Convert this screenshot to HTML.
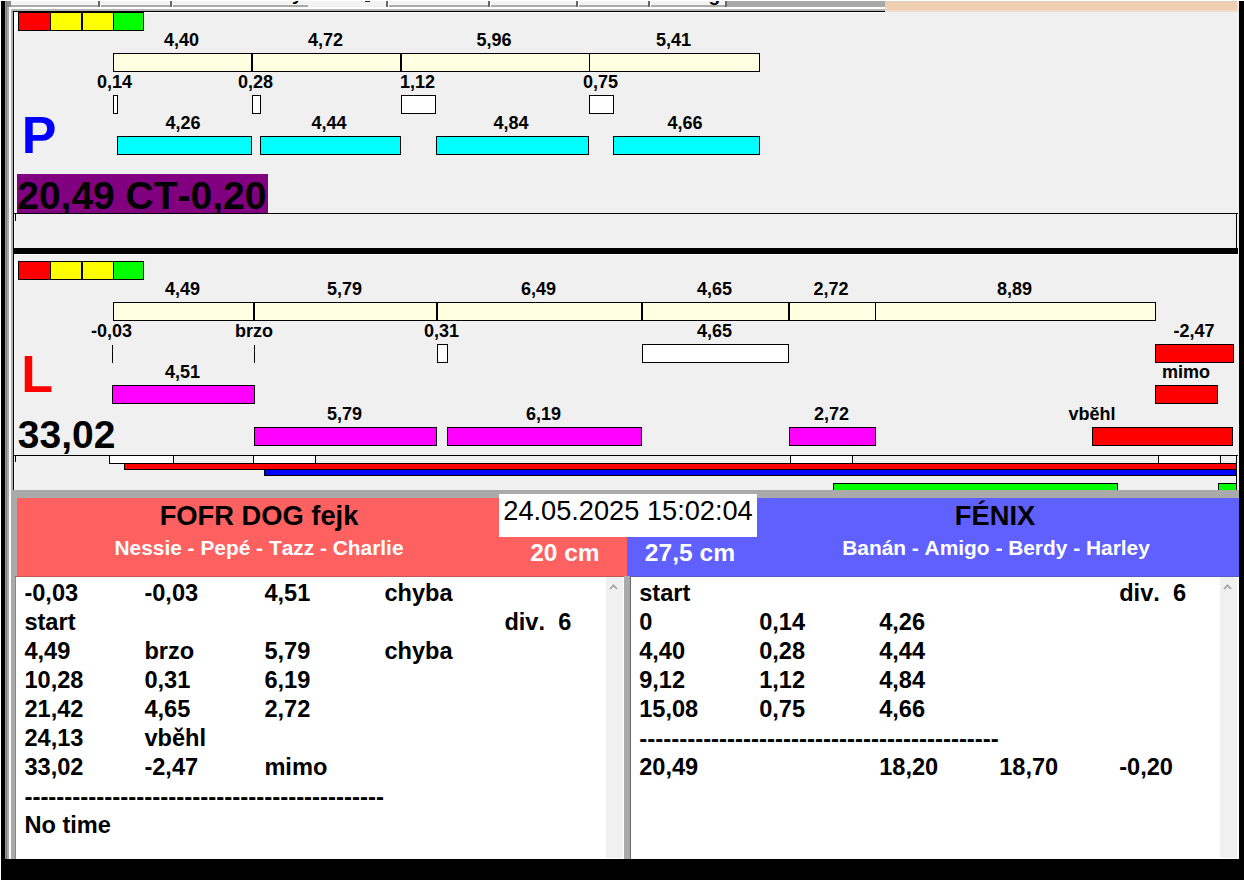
<!DOCTYPE html>
<html lang="cs">
<head>
<meta charset="utf-8">
<title>Flyball</title>
<style>
html,body{margin:0;padding:0}
body{font-kerning:none;width:1244px;height:880px;position:relative;overflow:hidden;background:#fff;font-family:"Liberation Sans",sans-serif;color:#000}
.r{position:absolute}
.b{position:absolute;box-sizing:border-box;border:1px solid #000}
.l{position:absolute;font-weight:bold;font-size:18px;line-height:20px;white-space:nowrap;transform:translateX(-50%)}
.big{position:absolute;font-weight:bold;font-size:39px;line-height:40px;white-space:nowrap}
.side{position:absolute;font-weight:bold;font-size:52px;line-height:52px}
.ta{position:absolute;background:#fff;font-weight:bold;font-size:23.6px;line-height:29px;overflow:hidden;box-sizing:border-box;tab-size:120px;-moz-tab-size:120px}
.row{position:relative;height:29px}
.row span{position:absolute;top:0;white-space:pre}
.row span.d{font-size:24px}
.tab{position:absolute;font-weight:bold;font-size:19px;line-height:20px}
.hd{position:absolute;font-weight:bold;white-space:nowrap;text-align:center}
</style>
</head>
<body>

<div class="r" style="left:1px;top:1px;width:4px;height:879px;background:#000"></div>
<div class="r" style="left:5px;top:1px;width:1px;height:858px;background:#999"></div>
<div class="r" style="left:6px;top:1px;width:1px;height:858px;background:#777"></div>
<div class="r" style="left:7px;top:1px;width:2px;height:858px;background:#aaa"></div>
<div class="r" style="left:9px;top:1px;width:2px;height:858px;background:#fff"></div>
<div class="r" style="left:11px;top:7px;width:2px;height:483px;background:#b0b0b0"></div>
<div class="r" style="left:1239px;top:1px;width:5px;height:879px;background:#000"></div>
<div class="r" style="left:7px;top:1px;width:4px;height:6px;background:#8c8c8c"></div>
<div class="r" style="left:11px;top:1px;width:715px;height:4px;background:#f4f4f4"></div>
<div class="r" style="left:11px;top:5px;width:715px;height:2px;background:#aaa"></div>
<div class="r" style="left:726px;top:1px;width:159px;height:6px;background:#a9a9a9"></div>
<div class="r" style="left:11px;top:7px;width:874px;height:2px;background:#fff"></div>
<div class="r" style="left:11px;top:9px;width:874px;height:2px;background:#b4b4b4"></div>
<div class="r" style="left:98px;top:1px;width:2px;height:6px;background:#666"></div>
<div class="r" style="left:100px;top:1px;width:1px;height:6px;background:#fff"></div>
<div class="r" style="left:170px;top:1px;width:2px;height:6px;background:#666"></div>
<div class="r" style="left:172px;top:1px;width:1px;height:6px;background:#fff"></div>
<div class="r" style="left:386px;top:1px;width:2px;height:6px;background:#666"></div>
<div class="r" style="left:388px;top:1px;width:1px;height:6px;background:#fff"></div>
<div class="r" style="left:488px;top:1px;width:2px;height:6px;background:#666"></div>
<div class="r" style="left:490px;top:1px;width:1px;height:6px;background:#fff"></div>
<div class="r" style="left:576px;top:1px;width:2px;height:6px;background:#666"></div>
<div class="r" style="left:578px;top:1px;width:1px;height:6px;background:#fff"></div>
<div class="r" style="left:648px;top:1px;width:2px;height:6px;background:#666"></div>
<div class="r" style="left:650px;top:1px;width:1px;height:6px;background:#fff"></div>
<div class="r" style="left:725px;top:1px;width:2px;height:6px;background:#666"></div>
<div class="r" style="left:308px;top:5px;width:78px;height:2px;background:#f0f0f0"></div>
<div class="r" style="left:365px;top:1px;width:5px;height:1px;background:#222"></div>
<div class="r" style="left:280px;top:1px;width:30px;height:4px;overflow:hidden"><div class="tab" style="left:12px;top:-17px">y</div></div>
<div class="r" style="left:700px;top:1px;width:24px;height:4px;overflow:hidden"><div class="tab" style="left:8.5px;top:-15.6px">g</div></div>
<div class="r" style="left:885px;top:1px;width:354px;height:11px;background:#efd0b4"></div>
<div class="r" style="left:885px;top:1px;width:354px;height:2px;background:#e6cfba"></div>
<div class="r" style="left:885px;top:10px;width:354px;height:2px;background:#efdccc"></div>
<div class="r" style="left:1237px;top:1px;width:2px;height:11px;background:#f3e6da"></div>
<div class="r" style="left:14px;top:12px;width:1225px;height:478px;background:#f0f0f0"></div>
<div class="r" style="left:13px;top:11px;width:872px;height:1px;background:#000"></div>
<div class="r" style="left:14px;top:12px;width:871px;height:1px;background:#fff"></div>
<div class="r" style="left:13px;top:11px;width:1px;height:479px;background:#000"></div>
<div class="r" style="left:14px;top:12px;width:1px;height:478px;background:#fff"></div>
<div class="r" style="left:13px;top:248px;width:1225px;height:6px;background:#000"></div>
<div class="r" style="left:14px;top:254px;width:1223px;height:1px;background:#fff"></div>
<div class="r" style="left:14px;top:12px;width:4px;height:19px;background:#fff"></div>
<div class="b" style="left:18px;top:12px;width:33px;height:19px;background:#ff0000;"></div>
<div class="b" style="left:50px;top:12px;width:32px;height:19px;background:#ffff00;"></div>
<div class="b" style="left:81px;top:12px;width:33px;height:19px;background:#ffff00;"></div>
<div class="r" style="left:81px;top:12px;width:2px;height:19px;background:#000"></div>
<div class="b" style="left:113px;top:12px;width:31px;height:19px;background:#00ff00;"></div>
<div class="b" style="left:113px;top:53px;width:647px;height:19px;background:#ffffe1;"></div>
<div class="r" style="left:251px;top:53px;width:2px;height:19px;background:#000"></div>
<div class="r" style="left:400px;top:53px;width:2px;height:19px;background:#000"></div>
<div class="r" style="left:589px;top:53px;width:1px;height:19px;background:#000"></div>
<div class="l" style="left:181.5px;top:29.7px">4,40</div>
<div class="l" style="left:325.5px;top:29.7px">4,72</div>
<div class="l" style="left:494.0px;top:29.7px">5,96</div>
<div class="l" style="left:673.5px;top:29.7px">5,41</div>
<div class="b" style="left:113px;top:95px;width:5px;height:19px;background:#fff;"></div>
<div class="l" style="left:114.5px;top:71.7px">0,14</div>
<div class="b" style="left:252px;top:95px;width:9px;height:19px;background:#fff;"></div>
<div class="l" style="left:255.5px;top:71.7px">0,28</div>
<div class="b" style="left:401px;top:95px;width:35px;height:19px;background:#fff;"></div>
<div class="l" style="left:417.5px;top:71.7px">1,12</div>
<div class="b" style="left:589px;top:95px;width:25px;height:19px;background:#fff;"></div>
<div class="l" style="left:600.5px;top:71.7px">0,75</div>
<div class="b" style="left:117px;top:136px;width:135px;height:19px;background:#00ffff;"></div>
<div class="l" style="left:183.1px;top:112.7px">4,26</div>
<div class="b" style="left:260px;top:136px;width:141px;height:19px;background:#00ffff;"></div>
<div class="l" style="left:329.1px;top:112.7px">4,44</div>
<div class="b" style="left:436px;top:136px;width:153px;height:19px;background:#00ffff;"></div>
<div class="l" style="left:511.1px;top:112.7px">4,84</div>
<div class="b" style="left:613px;top:136px;width:147px;height:19px;background:#00ffff;"></div>
<div class="l" style="left:685.1px;top:112.7px">4,66</div>
<div class="side" style="left:21.8px;top:108.5px;color:#0000ff">P</div>
<div class="r" style="left:17px;top:174px;width:251px;height:39px;background:#800080;overflow:hidden"><div class="big" style="left:0.2px;top:2px">20,49 CT-0,20</div></div>
<div class="r" style="left:14px;top:213px;width:1224px;height:1px;background:#000"></div>
<div class="r" style="left:1236px;top:213px;width:1px;height:35px;background:#000"></div>
<div class="r" style="left:15px;top:214px;width:1px;height:7px;background:#000"></div>
<div class="r" style="left:14px;top:261px;width:4px;height:19px;background:#fff"></div>
<div class="b" style="left:18px;top:261px;width:33px;height:19px;background:#ff0000;"></div>
<div class="b" style="left:50px;top:261px;width:32px;height:19px;background:#ffff00;"></div>
<div class="b" style="left:81px;top:261px;width:33px;height:19px;background:#ffff00;"></div>
<div class="r" style="left:81px;top:261px;width:2px;height:19px;background:#000"></div>
<div class="b" style="left:113px;top:261px;width:31px;height:19px;background:#00ff00;"></div>
<div class="b" style="left:113px;top:302px;width:1043px;height:19px;background:#ffffe1;"></div>
<div class="r" style="left:253px;top:302px;width:2px;height:19px;background:#000"></div>
<div class="r" style="left:436px;top:302px;width:2px;height:19px;background:#000"></div>
<div class="r" style="left:641px;top:302px;width:2px;height:19px;background:#000"></div>
<div class="r" style="left:788px;top:302px;width:2px;height:19px;background:#000"></div>
<div class="r" style="left:875px;top:302px;width:1px;height:19px;background:#000"></div>
<div class="l" style="left:182.5px;top:278.7px">4,49</div>
<div class="l" style="left:344.5px;top:278.7px">5,79</div>
<div class="l" style="left:538.5px;top:278.7px">6,49</div>
<div class="l" style="left:714.5px;top:278.7px">4,65</div>
<div class="l" style="left:831.0px;top:278.7px">2,72</div>
<div class="l" style="left:1014.5px;top:278.7px">8,89</div>
<div class="r" style="left:112px;top:345px;width:1px;height:18px;background:#000"></div>
<div class="l" style="left:111.5px;top:320.7px">-0,03</div>
<div class="r" style="left:254px;top:345px;width:1px;height:18px;background:#000"></div>
<div class="l" style="left:254px;top:320.7px">brzo</div>
<div class="b" style="left:437px;top:344px;width:11px;height:19px;background:#fff;"></div>
<div class="l" style="left:441.5px;top:320.7px">0,31</div>
<div class="b" style="left:642px;top:344px;width:147px;height:19px;background:#fff;"></div>
<div class="l" style="left:714.5px;top:320.7px">4,65</div>
<div class="b" style="left:1155px;top:344px;width:79px;height:19px;background:#ff0000;"></div>
<div class="l" style="left:1194px;top:320.7px">-2,47</div>
<div class="b" style="left:112px;top:385px;width:143px;height:19px;background:#ff00ff;"></div>
<div class="l" style="left:182.5px;top:362.2px">4,51</div>
<div class="b" style="left:1155px;top:385px;width:63px;height:19px;background:#ff0000;"></div>
<div class="l" style="left:1186px;top:362.2px">mimo</div>
<div class="b" style="left:254px;top:427px;width:183px;height:19px;background:#ff00ff;"></div>
<div class="l" style="left:344.5px;top:403.7px">5,79</div>
<div class="b" style="left:447px;top:427px;width:195px;height:19px;background:#ff00ff;"></div>
<div class="l" style="left:543.5px;top:403.7px">6,19</div>
<div class="b" style="left:789px;top:427px;width:87px;height:19px;background:#ff00ff;"></div>
<div class="l" style="left:831.5px;top:403.7px">2,72</div>
<div class="b" style="left:1092px;top:427px;width:141px;height:19px;background:#ff0000;"></div>
<div class="l" style="left:1092px;top:403.7px">vběhl</div>
<div class="side" style="left:21.3px;top:347.6px;color:#ff0000">L</div>
<div class="big" style="left:17.8px;top:415px">33,02</div>
<div class="r" style="left:14px;top:455px;width:1224px;height:1px;background:#000"></div>
<div class="r" style="left:1236px;top:455px;width:1px;height:35px;background:#000"></div>
<div class="r" style="left:15px;top:456px;width:1px;height:6px;background:#000"></div>
<div class="b" style="left:109px;top:455px;width:65px;height:9px;background:#fff;"></div>
<div class="b" style="left:253px;top:455px;width:63px;height:9px;background:#fff;"></div>
<div class="b" style="left:790px;top:455px;width:63px;height:9px;background:#fff;"></div>
<div class="b" style="left:1158px;top:455px;width:63px;height:9px;background:#fff;"></div>
<div class="b" style="left:124px;top:463px;width:1113px;height:7px;background:#ff0000;"></div>
<div class="b" style="left:264px;top:469px;width:973px;height:7px;background:#0000ff;"></div>
<div class="b" style="left:833px;top:483px;width:285px;height:8px;background:#00ff00;"></div>
<div class="b" style="left:1218px;top:483px;width:19px;height:8px;background:#00ff00;"></div>
<div class="r" style="left:11px;top:490px;width:1228px;height:369px;background:#aaaaaa"></div>
<div class="r" style="left:17px;top:498px;width:610px;height:78px;background:#ff6060"></div>
<div class="r" style="left:627px;top:498px;width:612px;height:78px;background:#6060ff"></div>
<div class="r" style="left:499px;top:494px;width:258px;height:43px;background:#fff"></div>
<div class="hd" style="left:17px;top:499.5px;width:484px;font-size:27.3px;line-height:31px">FOFR DOG fejk</div>
<div class="hd" style="left:17px;top:536.3px;width:484px;font-size:20.9px;line-height:24px;color:#fff">Nessie - Pepé - Tazz - Charlie</div>
<div class="hd" style="left:757px;top:499.5px;width:476px;font-size:27.3px;line-height:31px">FÉNIX</div>
<div class="hd" style="left:757px;top:536.3px;width:478px;font-size:20.9px;line-height:24px;color:#fff">Banán - Amigo - Berdy - Harley</div>
<div class="hd" style="left:499px;top:494.7px;width:258px;font-size:27.2px;line-height:31px;font-weight:normal">24.05.2025 15:02:04</div>
<div class="hd" style="left:530.2px;top:538.6px;font-size:24.5px;line-height:28px;color:#fff">20 cm</div>
<div class="hd" style="left:644.8px;top:538.6px;font-size:24.6px;line-height:28px;color:#fff">27,5 cm</div>
<div class="ta" style="left:16px;top:577px;width:608px;height:282px;padding:1.7px 0 0 8.4px">
<div class="row"><span style="left:0px">-0,03</span><span style="left:120px">-0,03</span><span style="left:240px">4,51</span><span style="left:360px">chyba</span></div>
<div class="row"><span style="left:0px">start</span><span style="left:480px">div.  6</span></div>
<div class="row"><span style="left:0px">4,49</span><span style="left:120px">brzo</span><span style="left:240px">5,79</span><span style="left:360px">chyba</span></div>
<div class="row"><span style="left:0px">10,28</span><span style="left:120px">0,31</span><span style="left:240px">6,19</span></div>
<div class="row"><span style="left:0px">21,42</span><span style="left:120px">4,65</span><span style="left:240px">2,72</span></div>
<div class="row"><span style="left:0px">24,13</span><span style="left:120px">vběhl</span></div>
<div class="row"><span style="left:0px">33,02</span><span style="left:120px">-2,47</span><span style="left:240px">mimo</span></div>
<div class="row"><span class=d style="left:0px">---------------------------------------------</span></div>
<div class="row"><span style="left:0px">No time</span></div>
</div>
<div class="ta" style="left:631px;top:577px;width:608px;height:282px;padding:1.7px 0 0 8.2px">
<div class="row"><span style="left:0px">start</span><span style="left:480px">div.  6</span></div>
<div class="row"><span style="left:0px">0</span><span style="left:120px">0,14</span><span style="left:240px">4,26</span></div>
<div class="row"><span style="left:0px">4,40</span><span style="left:120px">0,28</span><span style="left:240px">4,44</span></div>
<div class="row"><span style="left:0px">9,12</span><span style="left:120px">1,12</span><span style="left:240px">4,84</span></div>
<div class="row"><span style="left:0px">15,08</span><span style="left:120px">0,75</span><span style="left:240px">4,66</span></div>
<div class="row"><span class=d style="left:0px">---------------------------------------------</span></div>
<div class="row"><span style="left:0px">20,49</span><span style="left:240px">18,20</span><span style="left:360px">18,70</span><span style="left:480px">-0,20</span></div>
</div>
<div class="r" style="left:606px;top:577px;width:17px;height:281px;background:#f0f0f0"></div>
<svg class="r" style="left:609px;top:583px" width="9" height="8" viewBox="0 0 9 8"><path d="M1 6 L4.5 2.3 L8 6" fill="none" stroke="#a6a6a6" stroke-width="1.8"/></svg>
<div class="r" style="left:1220px;top:577px;width:17px;height:281px;background:#f0f0f0"></div>
<svg class="r" style="left:1223px;top:583px" width="9" height="8" viewBox="0 0 9 8"><path d="M1 6 L4.5 2.3 L8 6" fill="none" stroke="#a6a6a6" stroke-width="1.8"/></svg>
<div class="r" style="left:15px;top:576px;width:1px;height:283px;background:#8a8a8a"></div>
<div class="r" style="left:630px;top:576px;width:1px;height:283px;background:#696969"></div>
<div class="r" style="left:15px;top:576px;width:609px;height:1px;background:#c05858"></div>
<div class="r" style="left:631px;top:576px;width:608px;height:1px;background:#5858c0"></div>
<div class="r" style="left:1px;top:859px;width:1243px;height:21px;background:#000"></div>
</body>
</html>
